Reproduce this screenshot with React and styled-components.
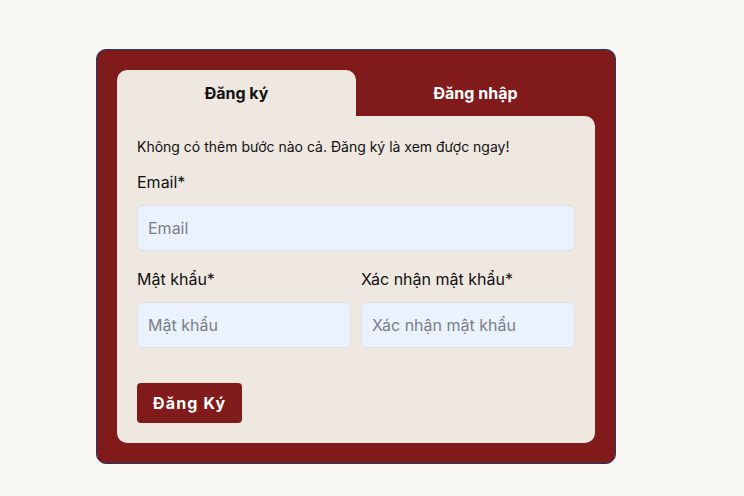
import React, { useState } from 'react';
import styled, { createGlobalStyle } from 'styled-components';

const GlobalStyle = createGlobalStyle`
  html, body {
    margin: 0;
    padding: 0;
    background: #f9f7f3;
    font-family: Inter, "Noto Sans", sans-serif;
  }
`;

const Page = styled.div`
  padding: 49px 0 0 96px;
  min-height: 496px;
  box-sizing: border-box;
`;

const Card = styled.div`
  width: 520px;
  box-sizing: border-box;
  background: #811a1a;
  border: 1px solid #1e3a6e;
  border-radius: 10px;
  padding: 20px;
`;

const Tabs = styled.div`
  display: grid;
  grid-template-columns: 1fr 1fr;
  height: 46px;
`;

const Tab = styled.button`
  border: none;
  font-family: inherit;
  font-size: 16px;
  font-weight: 700;
  cursor: pointer;
  border-radius: 10px 10px 0 0;
  background: ${p => (p.$active ? '#efe8e1' : 'transparent')};
  color: ${p => (p.$active ? '#111' : '#fff')};
  padding: 0;
`;

const Panel = styled.div`
  background: #efe8e1;
  border-radius: ${p => (p.$first ? '0 10px 10px 10px' : '10px 0 10px 10px')};
  padding: 21px 20px 20px;
`;

const Intro = styled.p`
  margin: 0 0 13px;
  font-size: 14px;
  line-height: 20px;
  color: #111;
`;

const Label = styled.label`
  display: block;
  font-size: 16px;
  line-height: 24px;
  color: #111;
  margin-bottom: 11px;
`;

const Input = styled.input`
  display: block;
  width: 100%;
  box-sizing: border-box;
  height: 46px;
  padding: 0 10px;
  font-family: inherit;
  font-size: 16px;
  background: #eaf2fe;
  border: 1px solid #dcdfe4;
  border-radius: 6px;
  color: #111;
  &::placeholder {
    color: #7b7e85;
  }
`;

const Row = styled.div`
  display: grid;
  grid-template-columns: 1fr 1fr;
  gap: 10px;
  margin-top: 16px;
`;

const Submit = styled.button`
  margin-top: 35px;
  height: 40px;
  padding: 0 16px;
  background: #811a1a;
  color: #fff;
  border: none;
  border-radius: 4px;
  font-family: inherit;
  font-size: 16px;
  font-weight: 700;
  letter-spacing: 1.15px;
  cursor: pointer;
`;

export default function App() {
  const [tab, setTab] = useState(0);
  return (
    <>
      <GlobalStyle />
      <Page>
        <Card>
          <Tabs>
            <Tab $active={tab === 0} onClick={() => setTab(0)}>Đăng ký</Tab>
            <Tab $active={tab === 1} onClick={() => setTab(1)}>Đăng nhập</Tab>
          </Tabs>
          <Panel $first={tab === 0}>
            <Intro>Không có thêm bước nào cả. Đăng ký là xem được ngay!</Intro>
            <Label>Email*</Label>
            <Input type="email" placeholder="Email" />
            <Row>
              <div>
                <Label>Mật khẩu*</Label>
                <Input type="password" placeholder="Mật khẩu" />
              </div>
              <div>
                <Label>Xác nhận mật khẩu*</Label>
                <Input type="password" placeholder="Xác nhận mật khẩu" />
              </div>
            </Row>
            <Submit>Đăng Ký</Submit>
          </Panel>
        </Card>
      </Page>
    </>
  );
}
